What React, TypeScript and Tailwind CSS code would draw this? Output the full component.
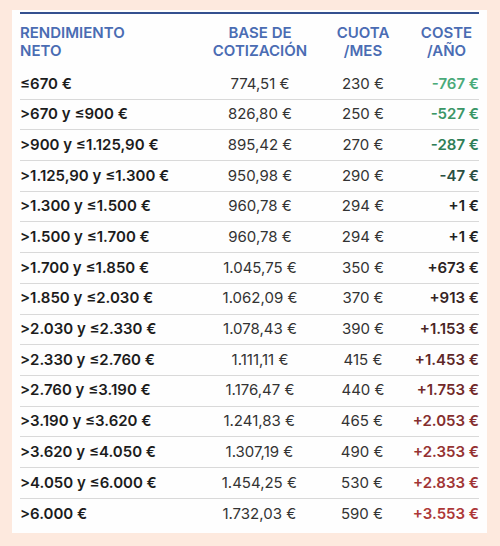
const rows = [
  { tramo: "≤670 €", base: "774,51 €", cuota: "230 €", coste: "-767 €", color: "#4aaa7a" },
  { tramo: ">670 y ≤900 €", base: "826,80 €", cuota: "250 €", coste: "-527 €", color: "#3a9666" },
  { tramo: ">900 y ≤1.125,90 €", base: "895,42 €", cuota: "270 €", coste: "-287 €", color: "#2f7e57" },
  { tramo: ">1.125,90 y ≤1.300 €", base: "950,98 €", cuota: "290 €", coste: "-47 €", color: "#2b4f42" },
  { tramo: ">1.300 y ≤1.500 €", base: "960,78 €", cuota: "294 €", coste: "+1 €", color: "#222222" },
  { tramo: ">1.500 y ≤1.700 €", base: "960,78 €", cuota: "294 €", coste: "+1 €", color: "#222222" },
  { tramo: ">1.700 y ≤1.850 €", base: "1.045,75 €", cuota: "350 €", coste: "+673 €", color: "#2a2222" },
  { tramo: ">1.850 y ≤2.030 €", base: "1.062,09 €", cuota: "370 €", coste: "+913 €", color: "#362424" },
  { tramo: ">2.030 y ≤2.330 €", base: "1.078,43 €", cuota: "390 €", coste: "+1.153 €", color: "#4a2626" },
  { tramo: ">2.330 y ≤2.760 €", base: "1.111,11 €", cuota: "415 €", coste: "+1.453 €", color: "#5e2828" },
  { tramo: ">2.760 y ≤3.190 €", base: "1.176,47 €", cuota: "440 €", coste: "+1.753 €", color: "#722a2a" },
  { tramo: ">3.190 y ≤3.620 €", base: "1.241,83 €", cuota: "465 €", coste: "+2.053 €", color: "#852e2e" },
  { tramo: ">3.620 y ≤4.050 €", base: "1.307,19 €", cuota: "490 €", coste: "+2.353 €", color: "#953232" },
  { tramo: ">4.050 y ≤6.000 €", base: "1.454,25 €", cuota: "530 €", coste: "+2.833 €", color: "#a13535" },
  { tramo: ">6.000 €", base: "1.732,03 €", cuota: "590 €", coste: "+3.553 €", color: "#ad3838" },
];

export default function App() {
  return (
    <div className="w-[500px] h-[546px] bg-[#fde9de] pt-[10px] pl-[12px]" style={{ fontFamily: "Inter, 'Noto Sans', sans-serif" }}>
      <div className="w-[475px] h-[523px] bg-[#fefefe] px-2 pt-[2px]">
        {/* Header */}
        <div className="flex border-t-2 border-[#34508f] pt-[10px] pb-[9px] text-[15px] leading-[18px] font-semibold text-[#4a6cb3]">
          <div className="w-[188px]">
            RENDIMIENTO
            <br />
            NETO
          </div>
          <div className="w-[104px] text-center whitespace-nowrap">
            BASE DE
            <br />
            COTIZACIÓN
          </div>
          <div className="w-[102px] text-center">
            CUOTA
            <br />
            /MES
          </div>
          <div className="flex-1 text-center">
            COSTE
            <br />
            /AÑO
          </div>
        </div>

        {/* Rows */}
        {rows.map((r, i) => (
          <div
            key={i}
            className={`flex items-center h-[30.7px] text-[15px] whitespace-nowrap ${i < rows.length - 1 ? "border-b border-[#d9d9d9]" : ""}`}
          >
            <div className="w-[188px] font-semibold text-[#1c1c1c]">{r.tramo}</div>
            <div className="w-[104px] text-center text-[#333333]">{r.base}</div>
            <div className="w-[102px] text-center text-[#333333]">{r.cuota}</div>
            <div className="flex-1 flex justify-end font-semibold" style={{ color: r.color }}>
              <span>{r.coste}</span>
            </div>
          </div>
        ))}
      </div>
    </div>
  );
}
